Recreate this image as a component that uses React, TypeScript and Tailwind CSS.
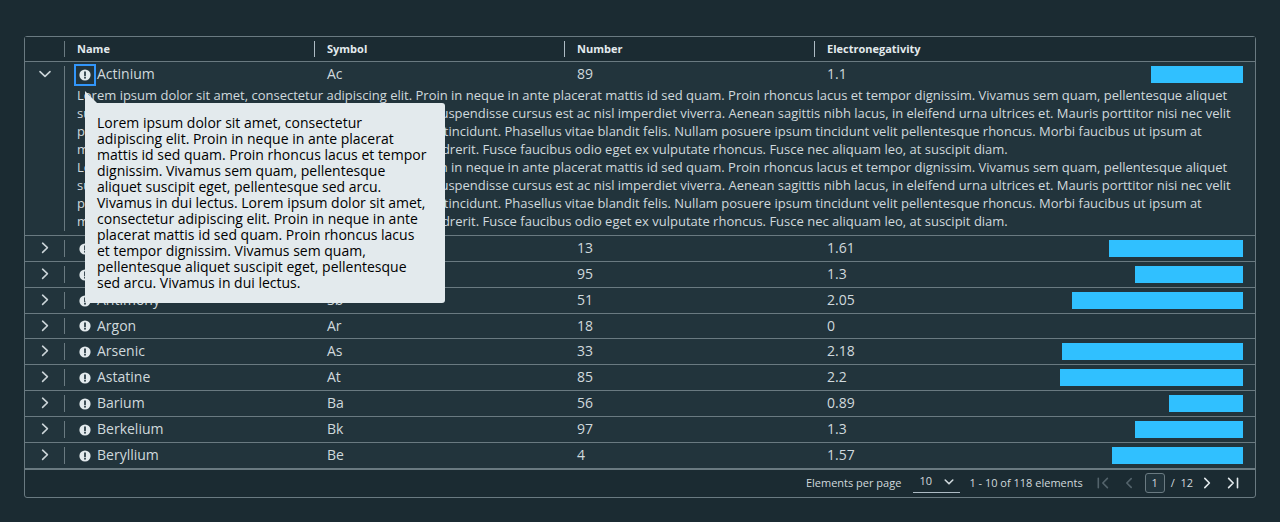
import React, { useState } from "react";

type Item = { name: string; symbol: string; number: number; electronegativity: number };

const items: Item[] = [
  { name: "Actinium", symbol: "Ac", number: 89, electronegativity: 1.1 },
  { name: "Aluminum", symbol: "Al", number: 13, electronegativity: 1.61 },
  { name: "Americium", symbol: "Am", number: 95, electronegativity: 1.3 },
  { name: "Antimony", symbol: "Sb", number: 51, electronegativity: 2.05 },
  { name: "Argon", symbol: "Ar", number: 18, electronegativity: 0 },
  { name: "Arsenic", symbol: "As", number: 33, electronegativity: 2.18 },
  { name: "Astatine", symbol: "At", number: 85, electronegativity: 2.2 },
  { name: "Barium", symbol: "Ba", number: 56, electronegativity: 0.89 },
  { name: "Berkelium", symbol: "Bk", number: 97, electronegativity: 1.3 },
  { name: "Beryllium", symbol: "Be", number: 4, electronegativity: 1.57 },
];

const detailLines = [
  "Lorem ipsum dolor sit amet, consectetur adipiscing elit. Proin in neque in ante placerat mattis id sed quam. Proin rhoncus lacus et tempor dignissim. Vivamus sem quam, pellentesque aliquet",
  "suscipit eget, pellentesque sed arcu. Vivamus in dui lectus. Suspendisse cursus est ac nisl imperdiet viverra. Aenean sagittis nibh lacus, in eleifend urna ultrices et. Mauris porttitor nisi nec velit",
  "pharetra porttitor. Sed vel ligula at quis sapien lacinia mattis tincidunt. Phasellus vitae blandit felis. Nullam posuere ipsum tincidunt velit pellentesque rhoncus. Morbi faucibus ut ipsum at",
  "malesuada. Nam feugiat lectus sit amet mollis sed vel at hendrerit. Fusce faucibus odio eget ex vulputate rhoncus. Fusce nec aliquam leo, at suscipit diam.",
];

const tooltipLines = [
  "Lorem ipsum dolor sit amet, consectetur",
  "adipiscing elit. Proin in neque in ante placerat",
  "mattis id sed quam. Proin rhoncus lacus et tempor",
  "dignissim. Vivamus sem quam, pellentesque",
  "aliquet suscipit eget, pellentesque sed arcu.",
  "Vivamus in dui lectus. Lorem ipsum dolor sit amet,",
  "consectetur adipiscing elit. Proin in neque in ante",
  "placerat mattis id sed quam. Proin rhoncus lacus",
  "et tempor dignissim. Vivamus sem quam,",
  "pellentesque aliquet suscipit eget, pellentesque",
  "sed arcu. Vivamus in dui lectus.",
];

function Icon({ d }: { d: string }) {
  return (
    <svg viewBox="0 0 16 16" className="block size-4" fill="none" stroke="currentColor" strokeWidth="1.6" strokeLinecap="round" strokeLinejoin="round" aria-hidden="true">
      <path d={d} />
    </svg>
  );
}

const RIGHT = "M5.6 3.2 10.4 7.7 5.6 12.4";
const DOWN = "M3 5.6 8 10.4 13 5.6";
const SELECT_DOWN = "M4.2 6 8 9.8 11.8 6";
const LEFT = "M10.2 3.6 5.8 8 10.2 12.4";
const NEXT = "M5.8 3.4 10.4 8 5.8 12.6";
const FIRST = "M12.4 3.4 7.8 8 12.4 12.6M3.3 3.2v9.6";
const LAST = "M3.6 3.4 8.2 8 3.6 12.6M12.5 3.2v9.6";

function InfoIcon() {
  return (
    <svg viewBox="0 0 16 16" className="block size-4" aria-hidden="true">
      <circle cx="8" cy="8" r="5.6" fill="#e3eaed" />
      <path d="M8 5.1v3.4" stroke="#21333b" strokeWidth="1.7" strokeLinecap="round" />
      <circle cx="8" cy="10.8" r="0.95" fill="#21333b" />
    </svg>
  );
}

function Tooltip() {
  return (
    <div role="tooltip" id="tip" className="absolute left-2 top-[25px] z-10 w-[360px] text-sm leading-4 text-black">
      <svg viewBox="0 0 12 12" className="block size-3" aria-hidden="true">
        <path d="M0 0 12 12H0Z" fill="#e3eaed" />
      </svg>
      <div className="rounded-[3px] rounded-tl-none bg-[#e3eaed] p-3">
        {tooltipLines.map((line, i) => (
          <span key={i} className="block whitespace-nowrap">{line} </span>
        ))}
      </div>
    </div>
  );
}

const separator = "relative after:absolute after:inset-y-1 after:right-0 after:w-px after:content-['']";

function Row({ item, expanded, onToggle, withTip }: { item: Item; expanded: boolean; onToggle: () => void; withTip: boolean }) {
  const edge = expanded ? "pt-1 pb-[3px]" : "border-b border-[#6a7a81] py-1";
  return (
    <>
      <tr>
        <td rowSpan={expanded ? 2 : 1} className={`${separator} border-b border-[#6a7a81] py-1 align-top after:bg-[#6a7a81]`}>
          <button type="button" aria-label={`Details of ${item.name}`} aria-expanded={expanded} onClick={onToggle} className="ml-3 block text-[#cbd4d8]">
            <Icon d={expanded ? DOWN : RIGHT} />
          </button>
        </td>
        <td className={`${edge} px-3 align-top`}>
          <div className="flex items-start gap-1">
            <div className={item.electronegativity > 0 ? "relative pt-px" : "relative"}>
              <button
                type="button"
                aria-label={`About ${item.name}`}
                aria-describedby={withTip ? "tip" : undefined}
                className={`block ${withTip ? "outline-2 outline-offset-1 outline-[#3296fa]" : ""}`}
              >
                <InfoIcon />
              </button>
              {withTip && <Tooltip />}
            </div>
            <span>{item.name}</span>
          </div>
        </td>
        <td className={`${edge} px-3 align-top`}>{item.symbol}</td>
        <td className={`${edge} px-3 align-top`}>{item.number}</td>
        <td className={`${edge} px-3 align-top`}>
          <div className="flex items-start justify-between">
            <span>{item.electronegativity}</span>
            {item.electronegativity > 0 && (
              <div className="h-[17px] bg-[#30c0ff]" style={{ width: `${item.electronegativity * 20}%` }} />
            )}
          </div>
        </td>
      </tr>
      {expanded && (
        <tr>
          <td colSpan={4} className="border-b border-[#6a7a81] px-3 pb-[5px] text-[13px] leading-[18px]">
            {[0, 1].map((n) => (
              <p key={n}>
                {detailLines.map((line, i) => (
                  <span key={i} className="block whitespace-nowrap">{line} </span>
                ))}
              </p>
            ))}
          </td>
        </tr>
      )}
    </>
  );
}

export default function App() {
  const [open, setOpen] = useState("Actinium");
  return (
    <main className="min-h-screen bg-[#1b2b32] px-6 pb-6 pt-9 font-['Open_Sans',sans-serif] text-[#d0d9dd]">
      <div className="rounded-[3px] border border-[#6a7a81]">
        <table className="w-full table-fixed border-separate border-spacing-0 bg-[#22343c] text-sm leading-4">
          <colgroup>
            <col className="w-10" />
            <col className="w-[250px]" />
            <col className="w-[250px]" />
            <col className="w-[250px]" />
            <col />
          </colgroup>
          <thead className="bg-[#1b2b32] text-left text-[11px] text-[#e3eaed]">
            <tr>
              <td className={`${separator} border-b border-[#6a7a81] py-1 after:bg-[#6a7a81]`} />
              {["Name", "Symbol", "Number"].map((h) => (
                <th key={h} scope="col" className={`${separator} border-b border-[#6a7a81] px-3 py-1 font-bold after:bg-[#adbbc4]`}>{h}</th>
              ))}
              <th scope="col" className="border-b border-[#6a7a81] px-3 py-1 font-bold">Electronegativity</th>
            </tr>
          </thead>
          <tbody>
            {items.map((item, i) => (
              <Row key={item.name} item={item} withTip={i === 0} expanded={open === item.name} onToggle={() => setOpen(open === item.name ? "" : item.name)} />
            ))}
          </tbody>
        </table>
        <footer className="flex h-7 items-center justify-end border-t border-[#6a7a81] pb-0.5 pr-[14px] text-[11px] leading-4">
          <label htmlFor="size" className="mr-3">Elements per page</label>
          <div className="relative mr-[9px] w-[47px]">
            <select id="size" defaultValue="10" className="block h-5 w-full appearance-none border-b border-[#adbbc4] bg-transparent pb-0.5 pl-1.5">
              <option>10</option>
              <option>20</option>
              <option>50</option>
            </select>
            <span className="pointer-events-none absolute right-[3px] top-px"><Icon d={SELECT_DOWN} /></span>
          </div>
          <span className="mr-3">1 - 10 of 118 elements</span>
          <button type="button" disabled aria-label="First page" className="mr-2.5 text-[#53636b]"><Icon d={FIRST} /></button>
          <button type="button" disabled aria-label="Previous page" className="mr-2 text-[#53636b]"><Icon d={LEFT} /></button>
          <input aria-label="Current page" defaultValue="1" className="h-5 w-5 rounded-[3px] border border-[#6a7a81] bg-[#22343c] text-center" />
          <span className="mx-1.5">/&nbsp; 12</span>
          <button type="button" aria-label="Next page" className="mr-2.5 text-[#e3eaed]"><Icon d={NEXT} /></button>
          <button type="button" aria-label="Last page" className="text-[#e3eaed]"><Icon d={LAST} /></button>
        </footer>
      </div>
    </main>
  );
}
